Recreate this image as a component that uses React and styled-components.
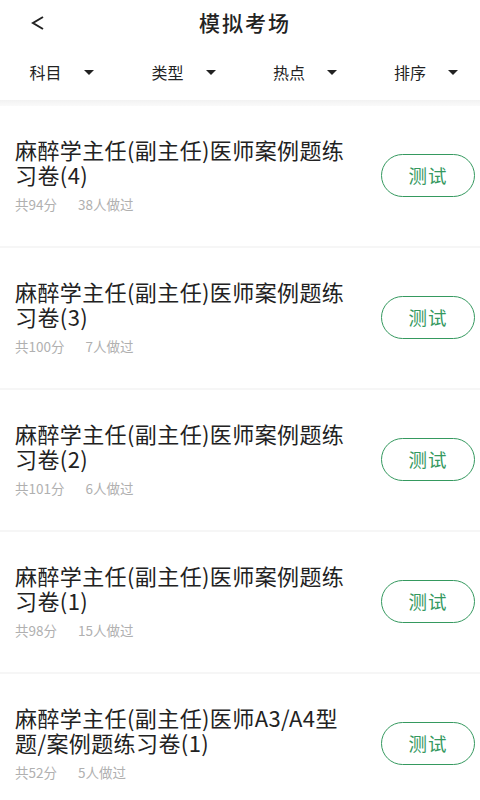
import React from 'react';
import styled, { createGlobalStyle } from 'styled-components';

const GlobalStyle = createGlobalStyle`
  * { box-sizing: border-box; }
  body {
    margin: 0;
    background: #ffffff;
    font-family: "Noto Sans CJK SC", "Noto Sans", "Liberation Sans", sans-serif;
    color: #222222;
  }
`;

const StdPage = styled.div`
  width: 480px;
  min-height: 800px;
  background: #ffffff;
  overflow: hidden;
`;

const StdHeader = styled.header`
  position: relative;
  display: flex;
  align-items: center;
  justify-content: center;
  height: 44px;
  padding-left: 10px;
`;

const StdBack = styled.button`
  position: absolute;
  left: 26px;
  top: 11px;
  width: 24px;
  height: 24px;
  padding: 0;
  border: none;
  background: none;
  display: flex;
  align-items: center;
  justify-content: center;
`;

const StdTitle = styled.h1`
  margin: 0;
  font-size: 21px;
  font-weight: 500;
  letter-spacing: 2px;
  color: #222222;
`;

const StdFilterBar = styled.nav`
  display: grid;
  grid-template-columns: repeat(4, 1fr);
  height: 56px;
  align-items: center;
`;

const StdFilter = styled.div`
  display: flex;
  align-items: center;
  justify-content: center;
  gap: 22px;
  font-size: 16px;
  color: #222222;
  padding-left: ${(props) => props.$shift}px;
`;

const StdCaret = styled.span`
  width: 0;
  height: 0;
  border-left: 5px solid transparent;
  border-right: 5px solid transparent;
  border-top: 5px solid #222222;
`;

const StdBand = styled.div`
  height: 6px;
  background: linear-gradient(#f2f2f2, #fafafa);
`;

const StdItem = styled.div`
  display: flex;
  align-items: center;
  justify-content: space-between;
  height: 142px;
  padding: 0 5px 2px 15px;
  border-bottom: 2px solid #f6f6f6;
`;

const StdCopy = styled.div`
  width: 345px;
`;

const StdName = styled.div`
  font-size: 22px;
  line-height: 25px;
  letter-spacing: 0.4px;
  color: #222222;
`;

const StdMeta = styled.div`
  display: flex;
  gap: 21px;
  margin-top: 8px;
  font-size: 13.5px;
  line-height: 18px;
  color: #b0b0b0;
`;

const StdTest = styled.button`
  width: 94px;
  height: 43px;
  border: 1.6px solid #35995f;
  border-radius: 22px;
  background: #ffffff;
  color: #35995f;
  font-family: inherit;
  font-size: 18.5px;
  letter-spacing: 1px;
  padding: 0;
`;

const filters = [
  { label: '科目', shift: 3 },
  { label: '类型', shift: 7 },
  { label: '热点', shift: 10 },
  { label: '排序', shift: 12 },
];

const papers = [
  { name: '麻醉学主任(副主任)医师案例题练习卷(4)', score: 94, people: 38 },
  { name: '麻醉学主任(副主任)医师案例题练习卷(3)', score: 100, people: 7 },
  { name: '麻醉学主任(副主任)医师案例题练习卷(2)', score: 101, people: 6 },
  { name: '麻醉学主任(副主任)医师案例题练习卷(1)', score: 98, people: 15 },
  { name: '麻醉学主任(副主任)医师A3/A4型题/案例题练习卷(1)', score: 52, people: 5 },
];

const App = () => {
  return (
    <StdPage>
      <GlobalStyle />
      <StdHeader>
        <StdBack aria-label='返回'>
          <svg width='14' height='14' viewBox='0 0 14 14'>
            <polyline points='12,1 2,7 12,13' fill='none' stroke='#222' strokeWidth='2' strokeLinejoin='miter' />
          </svg>
        </StdBack>
        <StdTitle>模拟考场</StdTitle>
      </StdHeader>

      <StdFilterBar>
        {filters.map((f) => (
          <StdFilter key={f.label} $shift={f.shift}>
            {f.label}
            <StdCaret />
          </StdFilter>
        ))}
      </StdFilterBar>

      <StdBand />

      {papers.map((p) => (
        <StdItem key={p.name}>
          <StdCopy>
            <StdName>{p.name}</StdName>
            <StdMeta>
              <span>共{p.score}分</span>
              <span>{p.people}人做过</span>
            </StdMeta>
          </StdCopy>
          <StdTest>测试</StdTest>
        </StdItem>
      ))}
    </StdPage>
  );
};

export default App;
